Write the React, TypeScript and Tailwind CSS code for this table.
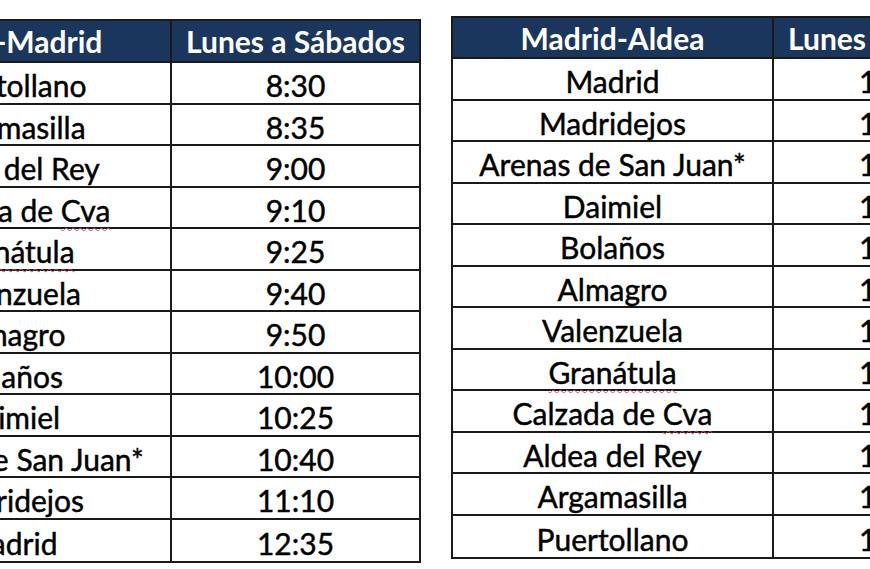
import React from 'react';

interface Parada {
  nombre: string;
  hora: string;
  subrayado?: 'all' | 'cva';
}

const ida: Parada[] = [
  { nombre: 'Puertollano', hora: '8:30' },
  { nombre: 'Argamasilla', hora: '8:35' },
  { nombre: 'Aldea del Rey', hora: '9:00' },
  { nombre: 'Calzada de Cva', hora: '9:10', subrayado: 'cva' },
  { nombre: 'Granátula', hora: '9:25', subrayado: 'all' },
  { nombre: 'Valenzuela', hora: '9:40' },
  { nombre: 'Almagro', hora: '9:50' },
  { nombre: 'Bolaños', hora: '10:00' },
  { nombre: 'Daimiel', hora: '10:25' },
  { nombre: 'Arenas de San Juan*', hora: '10:40' },
  { nombre: 'Madridejos', hora: '11:10' },
  { nombre: 'Madrid', hora: '12:35' },
];

const vuelta: Parada[] = [
  { nombre: 'Madrid', hora: '15:00' },
  { nombre: 'Madridejos', hora: '16:25' },
  { nombre: 'Arenas de San Juan*', hora: '16:55' },
  { nombre: 'Daimiel', hora: '17:10' },
  { nombre: 'Bolaños', hora: '17:35' },
  { nombre: 'Almagro', hora: '17:45' },
  { nombre: 'Valenzuela', hora: '17:55' },
  { nombre: 'Granátula', hora: '18:10', subrayado: 'all' },
  { nombre: 'Calzada de Cva', hora: '18:25', subrayado: 'cva' },
  { nombre: 'Aldea del Rey', hora: '18:35' },
  { nombre: 'Argamasilla', hora: '19:00' },
  { nombre: 'Puertollano', hora: '19:05' },
];

// subrayado rojo del corrector ortográfico
const squiggle = 'underline decoration-wavy decoration-[#c8506a] decoration-1 underline-offset-[5px]';

function Nombre({ p }: { p: Parada }) {
  if (p.subrayado === 'all') return <span className={squiggle}>{p.nombre}</span>;
  if (p.subrayado === 'cva') {
    return (
      <span>
        Calzada de <span className={squiggle}>Cva</span>
      </span>
    );
  }
  return <span>{p.nombre}</span>;
}

function Horario({ titulo, paradas, headerH }: { titulo: string; paradas: Parada[]; headerH: string }) {
  return (
    <div className="shrink-0 w-[572px] border-2 border-[#1a1a1a] grid grid-cols-[321px_1fr]">
      {/* cabecera */}
      <div className={`${headerH} bg-[#1b365d] border-r-2 border-b-2 border-[#1a1a1a] flex items-center justify-center text-white font-bold text-[30px] leading-none`}>
        {titulo}
      </div>
      <div className={`${headerH} bg-[#1b365d] border-b-2 border-[#1a1a1a] flex items-center justify-center text-white font-bold text-[30px] leading-none`}>
        Lunes a Sábados
      </div>
      {paradas.map((p, i) => (
        <React.Fragment key={i}>
          <div
            className={`h-[41.5px] border-r-2 border-[#1a1a1a] flex items-center justify-center text-[30px] leading-none pt-[5px] [-webkit-text-stroke:0.45px_#000] ${
              i !== paradas.length - 1 ? 'border-b-2' : ''
            }`}
          >
            <Nombre p={p} />
          </div>
          <div
            className={`h-[41.5px] border-[#1a1a1a] flex items-center justify-center text-[30px] leading-none pt-[5px] [-webkit-text-stroke:0.45px_#000] ${
              i !== paradas.length - 1 ? 'border-b-2' : ''
            }`}
          >
            {p.hora}
          </div>
        </React.Fragment>
      ))}
    </div>
  );
}

export default function App() {
  return (
    <div className="w-[870px] h-[569px] overflow-hidden bg-white flex items-start text-black font-['Lato','Liberation_Sans',sans-serif]">
      <div className="ml-[-151px] mt-[19px]">
        <Horario titulo="Aldea-Madrid" paradas={ida} headerH="h-[42px]" />
      </div>
      <div className="ml-[30px] mt-[16px]">
        <Horario titulo="Madrid-Aldea" paradas={vuelta} headerH="h-[41px]" />
      </div>
    </div>
  );
}
